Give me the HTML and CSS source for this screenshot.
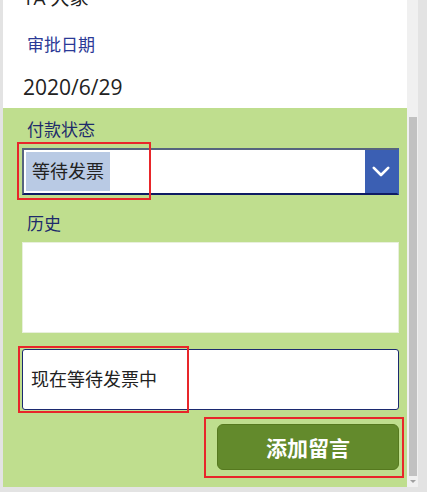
FILE: index.html
```
<!DOCTYPE html>
<html lang="zh-CN">
<head>
<meta charset="utf-8">
<link rel="stylesheet" href="styles.css">
</head>
<body>
<div class="frame">
  <div class="gutter"></div>
  <div class="main">
    <div class="top">
      <div class="cut">TA 大家</div>
      <div class="field-label">审批日期</div>
      <div class="date">2020/6/29</div>
    </div>
    <div class="panel">
      <div class="label">付款状态</div>
      <div class="dropdown">
        <span class="selected">等待发票</span>
        <span class="chev">
          <svg width="18" height="11" viewBox="0 0 18 11"><path d="M1.8 1.8 L9 9 L16.2 1.8" fill="none" stroke="#fff" stroke-width="2.6" stroke-linecap="round" stroke-linejoin="round"/></svg>
        </span>
      </div>
      <div class="label label-hist">历史</div>
      <div class="history"></div>
      <div class="input">现在等待发票中</div>
      <div class="actions"><button class="btn">添加留言</button></div>
    </div>
  </div>
  <div class="scroll">
    <div class="thumb"></div>
    <div class="arrow"></div>
  </div>
</div>
<div class="mark mark1"></div>
<div class="mark mark2"></div>
<div class="mark mark3"></div>
</body>
</html>
```
FILE: styles.css
```
* { box-sizing: border-box; }
html, body { margin: 0; padding: 0; }
body {
  width: 427px;
  height: 492px;
  overflow: hidden;
  background: #e3e3e3;
  font-family: "Open Sans", "Noto Sans", "Noto Sans CJK SC", sans-serif;
  position: relative;
}
.frame { display: flex; height: 487px; }
.gutter { width: 3px; flex: none; }
.main { width: 404px; flex: none; display: flex; flex-direction: column; }
.top { background: #fff; height: 108px; padding-left: 20px; overflow: hidden; }
.cut { font-size: 19px; line-height: 20px; margin-top: -12px; color: #222; height: 20px; }
.field-label { font-size: 17px; line-height: 24px; margin-top: 25px; padding-left: 4px; color: #2b3a96; }
.date { font-size: 21px; line-height: 28px; margin-top: 16px; color: #222; }
.panel {
  flex: 1;
  background: #bfde8e;
  padding: 10px 8px 0 19px;
  display: flex;
  flex-direction: column;
}
.label { font-size: 17px; line-height: 24px; padding-left: 5px; color: #1d2b6b; }
.label-hist { margin-top: 17px; }
.dropdown {
  margin-top: 6px;
  height: 47px;
  background: #fff;
  border: 2px solid #56647e;
  border-bottom-color: #0e1c64;
  border-right-color: #3b5fb3;
  display: flex;
  align-items: stretch;
  padding: 2px 0 0 2px;
}
.selected {
  background: #b9cae4;
  width: 84px;
  height: 39px;
  font-size: 18px;
  line-height: 39px;
  padding-left: 6px;
  color: #222;
}
.chev {
  margin-left: auto;
  width: 32px;
  margin-top: -2px;
  background: #3b5fb3;
  display: flex;
  align-items: center;
  justify-content: center;
}
.history { margin-top: 6px; height: 91px; background: #fff; border: 1px solid #e8f0dc; }
.input {
  margin-top: 16px;
  height: 61px;
  background: #fff;
  border: 1.5px solid #1c2a70;
  border-radius: 3px;
  font-size: 18px;
  line-height: 58px;
  padding-left: 8px;
  color: #222;
}
.actions { display: flex; justify-content: flex-end; margin-top: 14px; }
.btn {
  width: 182px;
  height: 46px;
  background: #638a2c;
  border: 1px solid #56791f;
  border-radius: 6px;
  color: #fff;
  font-family: "Noto Sans CJK SC", sans-serif;
  font-weight: 700;
  font-size: 21px;
  padding: 0;
}
.scroll { width: 11px; flex: none; background: #f0f0f0; display: flex; flex-direction: column; align-items: center; }
.thumb { margin-top: 117px; width: 8px; height: 359px; background: #c1c1c1; }
.arrow {
  margin-top: 4px;
  width: 0; height: 0;
  border-left: 3px solid transparent;
  border-right: 3px solid transparent;
  border-top: 3px solid #a0a0a0;
}
.mark { position: absolute; border: 2px solid #e8262a; }
.mark1 { left: 17px; top: 142px; width: 134px; height: 58px; }
.mark2 { left: 18px; top: 346px; width: 171px; height: 67px; }
.mark3 { left: 204px; top: 417px; width: 200px; height: 61px; }
```
